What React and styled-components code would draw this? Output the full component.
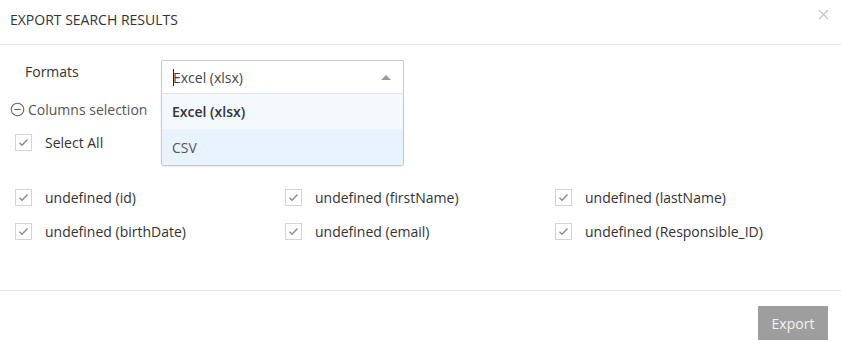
import React from 'react'
import styled, { createGlobalStyle } from 'styled-components'

const GlobalStyle = createGlobalStyle`
  html, body {
    margin: 0;
    padding: 0;
    background: #fff;
    font-family: "Open Sans", "Noto Sans", sans-serif;
    color: #333;
  }
  * { box-sizing: border-box; }
`

const Modal = styled.div`
  width: 841px;
  height: 351px;
  display: flex;
  flex-direction: column;
  background: #fff;
`

const Header = styled.div`
  height: 45px;
  padding: 0 10px;
  display: flex;
  align-items: center;
  justify-content: space-between;
  border-bottom: 1px solid #e8e8e8;
`

const Title = styled.h4`
  margin: 0;
  font-size: 14px;
  font-weight: 400;
  color: #333;
  margin-top: -6px;
`

const Close = styled.button`
  border: none;
  background: none;
  padding: 0;
  margin: -15px 1px 0 0;
  width: 12px;
  height: 12px;
  cursor: pointer;
  display: flex;
`

const Body = styled.div`
  flex: 1;
  padding: 15px 15px 0 10px;
  border-bottom: 1px solid #e8e8e8;
`

const FormRow = styled.div`
  display: flex;
  align-items: flex-start;
  height: 34px;
`

const Label = styled.label`
  width: 151px;
  padding: 2px 0 0 15px;
  font-size: 14px;
  line-height: 19px;
  color: #333;
`

const SelectWrap = styled.div`
  position: relative;
  width: 243px;
`

const SelectBox = styled.div`
  height: 34px;
  border: 1px solid #c8c8c8;
  border-bottom-color: #e3e3e3;
  border-radius: 2px 2px 0 0;
  display: flex;
  align-items: center;
  padding: 0 12px 0 11px;
  font-size: 14px;
  color: #444;
`

const Caret = styled.span`
  width: 1px;
  height: 17px;
  background: #222;
  margin-right: -1px;
`

const Value = styled.span`
  flex: 1;
`

const Arrow = styled.span`
  width: 0;
  height: 0;
  border-left: 5px solid transparent;
  border-right: 5px solid transparent;
  border-bottom: 5px solid #999;
`

const Menu = styled.ul`
  position: absolute;
  top: 34px;
  left: 0;
  right: 0;
  margin: 0;
  padding: 0;
  list-style: none;
  border: 1px solid #c8c8c8;
  border-top: none;
  border-radius: 0 0 3px 3px;
  box-shadow: 0 1px 2px rgba(0, 0, 0, 0.08);
  overflow: hidden;
  z-index: 5;
`

const Option = styled.li`
  height: ${p => (p.$first ? '35px' : '36px')};
  display: flex;
  align-items: center;
  padding: 0 10px;
  font-size: 14px;
  font-weight: ${p => (p.$selected ? 600 : 400)};
  color: ${p => (p.$selected ? '#333' : '#555')};
  background: ${p => (p.$active ? '#e9f3fd' : '#f4f9fe')};
`

const SectionToggle = styled.div`
  display: flex;
  align-items: center;
  gap: 3px;
  margin-top: 5px;
  height: 20px;
  font-size: 14px;
  color: #555;
`

const CheckRow = styled.label`
  display: flex;
  align-items: center;
  gap: 13px;
  height: 18px;
  padding-left: 5px;
  font-size: 14px;
  color: #333;
`

const SelectAllRow = styled(CheckRow)`
  margin-top: 14px;
`

const Box = styled.span`
  width: 17px;
  height: 17px;
  border: 1px solid #d4d4d4;
  background: #fff;
  display: flex;
  align-items: center;
  justify-content: center;
`

const ColumnsGrid = styled.div`
  display: grid;
  grid-template-columns: 270px 270px 270px;
  row-gap: 16px;
  margin-top: 37px;
`

const Footer = styled.div`
  height: 60px;
  display: flex;
  align-items: flex-start;
  justify-content: flex-end;
  padding: 15px 13px 0 0;
`

const ExportButton = styled.button`
  width: 70px;
  height: 34px;
  border: none;
  background: #9e9e9e;
  color: #f4f4f4;
  font-family: "Open Sans", "Noto Sans", sans-serif;
  font-size: 14px;
  cursor: not-allowed;
`

const Check = () => (
  <Box>
    <svg width="11" height="9" viewBox="0 0 11 9">
      <path d="M1.5 4.8 L4 7.2 L9.5 1.5" fill="none" stroke="#8a8a8a" strokeWidth="1.4" />
    </svg>
  </Box>
)

const columns = ['id', 'firstName', 'lastName', 'birthDate', 'email', 'Responsible_ID']

export default function App() {
  return (
    <>
      <GlobalStyle />
      <Modal>
        <Header>
          <Title>EXPORT SEARCH RESULTS</Title>
          <Close aria-label="Close">
            <svg width="11" height="11" viewBox="0 0 11 11">
              <path d="M1 1 L10 10 M10 1 L1 10" stroke="#c4c4c4" strokeWidth="1.2" />
            </svg>
          </Close>
        </Header>
        <Body>
          <FormRow>
            <Label>Formats</Label>
            <SelectWrap>
              <SelectBox>
                <Caret />
                <Value>Excel (xlsx)</Value>
                <Arrow />
              </SelectBox>
              <Menu>
                <Option $first $selected>Excel (xlsx)</Option>
                <Option $active>CSV</Option>
              </Menu>
            </SelectWrap>
          </FormRow>
          <SectionToggle>
            <svg width="15" height="15" viewBox="0 0 15 15">
              <circle cx="7.5" cy="7.5" r="6.3" fill="none" stroke="#666" strokeWidth="1.1" />
              <path d="M4.3 7.5 H10.7" stroke="#666" strokeWidth="1.1" />
            </svg>
            Columns selection
          </SectionToggle>
          <SelectAllRow>
            <Check />
            Select All
          </SelectAllRow>
          <ColumnsGrid>
            {columns.map(c => (
              <CheckRow key={c}>
                <Check />
                undefined ({c})
              </CheckRow>
            ))}
          </ColumnsGrid>
        </Body>
        <Footer>
          <ExportButton disabled>Export</ExportButton>
        </Footer>
      </Modal>
    </>
  )
}
